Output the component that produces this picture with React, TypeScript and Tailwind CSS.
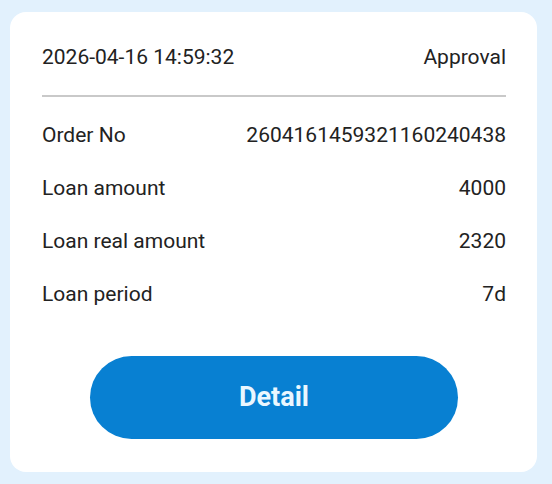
export default function App() {
  const rows = [
    { label: "Order No", value: "2604161459321160240438" },
    { label: "Loan amount", value: "4000" },
    { label: "Loan real amount", value: "2320" },
    { label: "Loan period", value: "7d" },
  ];

  return (
    <div
      className="w-[552px] h-[484px] bg-[#e2f1fd] pl-[10px] pr-[15px] pt-[12px]"
      style={{ fontFamily: "Roboto, 'Liberation Sans', sans-serif" }}
    >
      <div className="bg-white rounded-[16px] pl-[32px] pr-[31px] pt-[30px] pb-[33px]">
        <div className="flex items-center justify-between h-[32px] text-[21px] text-[#222]">
          <span>2026-04-16 14:59:32</span>
          <span>Approval</span>
        </div>
        <div className="mt-[21px] h-[2px] bg-[#c9c9c9]" />
        <div className="mt-[12px]">
          {rows.map((row) => (
            <div
              key={row.label}
              className="flex items-center justify-between h-[53px] text-[21px] text-[#222]"
            >
              <span>{row.label}</span>
              <span>{row.value}</span>
            </div>
          ))}
        </div>
        <div className="flex justify-center mt-[35px]">
          <button className="w-[368px] h-[83px] rounded-full bg-[#0880d2] text-[#eaf7ff] text-[27px] font-bold">
            Detail
          </button>
        </div>
      </div>
    </div>
  );
}
